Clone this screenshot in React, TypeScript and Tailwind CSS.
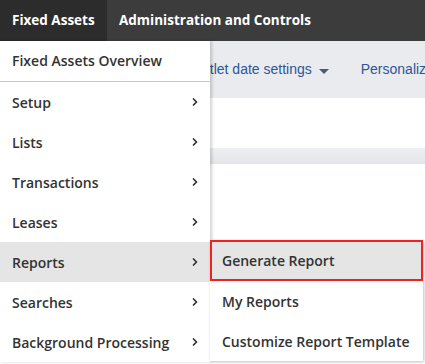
import { ChevronRight } from "lucide-react";

const menuItems = [
  "Setup",
  "Lists",
  "Transactions",
  "Leases",
  "Reports",
  "Searches",
  "Background Processing",
];

const reportItems = ["Generate Report", "My Reports", "Customize Report Template"];

export default function App() {
  return (
    <div
      className="relative w-[425px] h-[364px] overflow-hidden bg-white"
      style={{ fontFamily: "'Open Sans', 'Liberation Sans', sans-serif" }}
    >
      {/* top nav */}
      <div className="flex h-[41px] bg-[#3c3c3c] text-white text-[13.5px] font-bold">
        <div className="flex items-center w-[107px] pl-3 bg-[#2c2c2c]">Fixed Assets</div>
        <div className="flex items-center pl-3">Administration and Controls</div>
      </div>

      {/* page behind the menu */}
      <div style={{ fontFamily: "'Liberation Sans', Arial, sans-serif" }}>
        <div className="flex items-center h-[57px] bg-[#eaebef] pl-[188px] text-[14px] text-[#2b5797] whitespace-nowrap">
          <span>Portlet date settings</span>
          <span className="ml-[7px] mt-[3px] w-0 h-0 border-l-[5px] border-r-[5px] border-t-[5px] border-l-transparent border-r-transparent border-t-[#4b5a78]" />
          <span className="ml-[32px]">Personaliz</span>
        </div>
        <div className="h-[50px]" />
        <div className="h-[16px] bg-gradient-to-b from-[#eeeff2] to-[#e4e5e9]" />
      </div>

      {/* main dropdown */}
      <div className="absolute top-[41px] left-0 w-[210px] bg-white shadow-[2px_0_3px_rgba(0,0,0,0.18)] text-[14px] font-semibold text-[#333]">
        <div className="flex items-center h-[41px] pl-3 pb-[1px] border-b border-[#c8c8c8]">
          Fixed Assets Overview
        </div>
        {menuItems.map((item) => (
          <div
            key={item}
            className={`flex items-center justify-between h-[40px] pl-3 pr-[9px] ${
              item === "Reports" ? "bg-[#e5e5e5]" : ""
            }`}
          >
            <span>{item}</span>
            <ChevronRight className="w-3 h-3" strokeWidth={3.5} />
          </div>
        ))}
      </div>

      {/* reports submenu */}
      <div className="absolute top-[240px] left-[210px] w-[213px] bg-white shadow-[1px_1px_3px_rgba(0,0,0,0.25)] text-[14px] font-semibold text-[#333]">
        {reportItems.map((item, i) => (
          <div
            key={item}
            className={`flex items-center h-[40px] pl-3 ${
              i === 0 ? "bg-[#e5e5e5] border-2 border-[#ee2222] pl-[10px] h-[41px]" : ""
            }`}
          >
            {item}
          </div>
        ))}
      </div>
    </div>
  );
}
